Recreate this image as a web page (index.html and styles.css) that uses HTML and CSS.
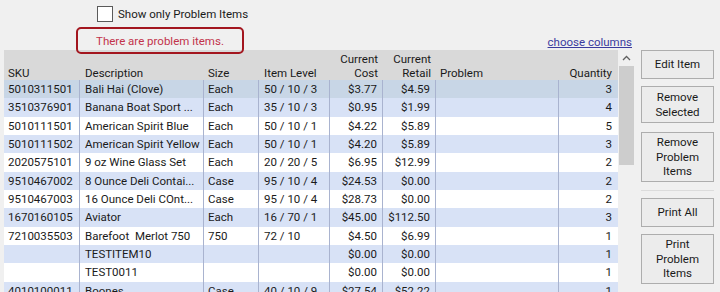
FILE: index.html
```html
<!DOCTYPE html>
<html lang="en">
<head>
  <meta charset="UTF-8">
  <title>Inventory Items</title>
  <link rel="stylesheet" href="styles.css">
</head>
<body>
  <div class="layout">
    <div class="list-side">
      <label class="filter"><span class="check"></span>Show only Problem Items</label>
      <div class="bar">
        <div class="notice">There are problem items.</div>
        <a class="choose" href="#">choose columns</a>
      </div>
      <div class="grid-area">
        <div class="table">
          <div class="head">
            <div class="cell">SKU</div>
            <div class="cell">Description</div>
            <div class="cell">Size</div>
            <div class="cell">Item Level</div>
            <div class="cell num">Current<br>Cost</div>
            <div class="cell num">Current<br>Retail</div>
            <div class="cell">Problem</div>
            <div class="cell num">Quantity</div>
          </div>
          <div class="row selected">
            <div class="cell">5010311501</div><div class="cell">Bali Hai (Clove)</div><div class="cell">Each</div><div class="cell">50 / 10 / 3</div><div class="cell num">$3.77</div><div class="cell num">$4.59</div><div class="cell"></div><div class="cell num">3</div>
          </div>
          <div class="row">
            <div class="cell">3510376901</div><div class="cell">Banana Boat Sport ...</div><div class="cell">Each</div><div class="cell">35 / 10 / 3</div><div class="cell num">$0.95</div><div class="cell num">$1.99</div><div class="cell"></div><div class="cell num">4</div>
          </div>
          <div class="row">
            <div class="cell">5010111501</div><div class="cell">American Spirit Blue</div><div class="cell">Each</div><div class="cell">50 / 10 / 1</div><div class="cell num">$4.22</div><div class="cell num">$5.89</div><div class="cell"></div><div class="cell num">5</div>
          </div>
          <div class="row">
            <div class="cell">5010111502</div><div class="cell">American Spirit Yellow</div><div class="cell">Each</div><div class="cell">50 / 10 / 1</div><div class="cell num">$4.20</div><div class="cell num">$5.89</div><div class="cell"></div><div class="cell num">3</div>
          </div>
          <div class="row">
            <div class="cell">2020575101</div><div class="cell">9 oz Wine Glass Set</div><div class="cell">Each</div><div class="cell">20 / 20 / 5</div><div class="cell num">$6.95</div><div class="cell num">$12.99</div><div class="cell"></div><div class="cell num">2</div>
          </div>
          <div class="row">
            <div class="cell">9510467002</div><div class="cell">8 Ounce Deli Contai...</div><div class="cell">Case</div><div class="cell">95 / 10 / 4</div><div class="cell num">$24.53</div><div class="cell num">$0.00</div><div class="cell"></div><div class="cell num">2</div>
          </div>
          <div class="row">
            <div class="cell">9510467003</div><div class="cell">16 Ounce Deli COnt...</div><div class="cell">Case</div><div class="cell">95 / 10 / 4</div><div class="cell num">$28.73</div><div class="cell num">$0.00</div><div class="cell"></div><div class="cell num">2</div>
          </div>
          <div class="row">
            <div class="cell">1670160105</div><div class="cell">Aviator</div><div class="cell">Each</div><div class="cell">16 / 70 / 1</div><div class="cell num">$45.00</div><div class="cell num">$112.50</div><div class="cell"></div><div class="cell num">3</div>
          </div>
          <div class="row">
            <div class="cell">7210035503</div><div class="cell">Barefoot&nbsp; Merlot 750</div><div class="cell">750</div><div class="cell">72 / 10</div><div class="cell num">$4.50</div><div class="cell num">$6.99</div><div class="cell"></div><div class="cell num">1</div>
          </div>
          <div class="row">
            <div class="cell"></div><div class="cell">TESTITEM10</div><div class="cell"></div><div class="cell"></div><div class="cell num">$0.00</div><div class="cell num">$0.00</div><div class="cell"></div><div class="cell num">1</div>
          </div>
          <div class="row">
            <div class="cell"></div><div class="cell">TEST0011</div><div class="cell"></div><div class="cell"></div><div class="cell num">$0.00</div><div class="cell num">$0.00</div><div class="cell"></div><div class="cell num">1</div>
          </div>
          <div class="row">
            <div class="cell">4010100011</div><div class="cell">Boones</div><div class="cell">Case</div><div class="cell">40 / 10 / 9</div><div class="cell num">$27.54</div><div class="cell num">$52.22</div><div class="cell"></div><div class="cell num">1</div>
          </div>
        </div>
        <div class="scrollbar">
          <svg class="arrow" width="9" height="6" viewBox="0 0 9 6"><path d="M1 5 L4.5 1.5 L8 5" fill="none" stroke="#606060" stroke-width="1.3"/></svg>
          <div class="thumb"></div>
        </div>
      </div>
    </div>

    <div class="actions">
      <button class="btn">Edit Item</button>
      <button class="btn two">Remove<br>Selected</button>
      <button class="btn three">Remove<br>Problem<br>Items</button>
      <div class="sep"></div>
      <button class="btn">Print All</button>
      <button class="btn three">Print<br>Problem<br>Items</button>
    </div>
  </div>
</body>
</html>
```

FILE: styles.css
```css
body {
  margin: 0;
  background: #f0f0f0;
  font-family: Roboto, "Open Sans", sans-serif;
  font-size: 11.5px;
  color: #1a1a1a;
  overflow: hidden;
}
.layout {
  display: flex;
  gap: 5px;
  padding-left: 4px;
  height: 292px;
}
.list-side { width: 632px; }

.filter {
  display: flex;
  align-items: center;
  gap: 5px;
  height: 27px;
  margin-left: 93px;
}
.check {
  width: 14px;
  height: 14px;
  background: #fff;
  border: 1px solid #5a5a5a;
}

.bar {
  display: flex;
  align-items: flex-end;
  justify-content: space-between;
  height: 23px;
}
.notice {
  position: relative;
  z-index: 1;
  box-sizing: border-box;
  width: 168px;
  height: 27px;
  margin-left: 72px;
  margin-bottom: -4px;
  border: 2px solid #a3161f;
  border-radius: 5px;
  display: flex;
  align-items: center;
  justify-content: center;
  color: #c2334b;
}
.choose {
  color: #3b3b9e;
  line-height: 16px;
  margin-right: 4px;
}

.grid-area { display: flex; }
.table {
  width: 614px;
  height: 242px;
  overflow: hidden;
}
.head, .row {
  display: grid;
  grid-template-columns: 76px 124px 55px 71px 53px 53px 123px 59px;
}
.head {
  height: 30px;
  background: #d9d9d9;
  align-items: end;
  line-height: 13.5px;
}
.cell {
  padding: 0 4px;
  white-space: nowrap;
  overflow: hidden;
}
.head .cell:nth-child(2),
.row .cell:nth-child(2),
.head .cell:nth-child(4),
.row .cell:nth-child(4) { padding-left: 5px; }
.num { text-align: right; padding-right: 5px; }
.head .cell:last-child,
.row .cell:last-child { padding-right: 6px; }

.row {
  height: 18.35px;
  line-height: 18px;
  background: #fff;
}
.row:nth-child(odd) { background: #d8e2f6; }
.row.selected { background: #c8d6e6; }
.row .cell { border-right: 1px solid #a9b3cf; }
.row .cell:last-child { border-right: none; }

.scrollbar {
  width: 18px;
  height: 242px;
  background: #f0f0f0;
}
.arrow {
  display: block;
  margin: 5px 0 0 4px;
}
.thumb {
  width: 15px;
  height: 99px;
  margin: 5px 0 0 1px;
  background: #cdcdcd;
}

.actions {
  display: flex;
  flex-direction: column;
  width: 73px;
  padding-top: 50px;
}
.btn {
  height: 29px;
  margin-bottom: 7px;
  padding: 0;
  font: inherit;
  color: #1a1a1a;
  line-height: 14.5px;
  background: #ececec;
  border: 1px solid #adadad;
}
.btn.two { height: 37px; margin-bottom: 9px; }
.btn.three { height: 50px; }
.sep {
  height: 1px;
  background: #dcdcdc;
  margin: 1px 0 7px;
}
```
